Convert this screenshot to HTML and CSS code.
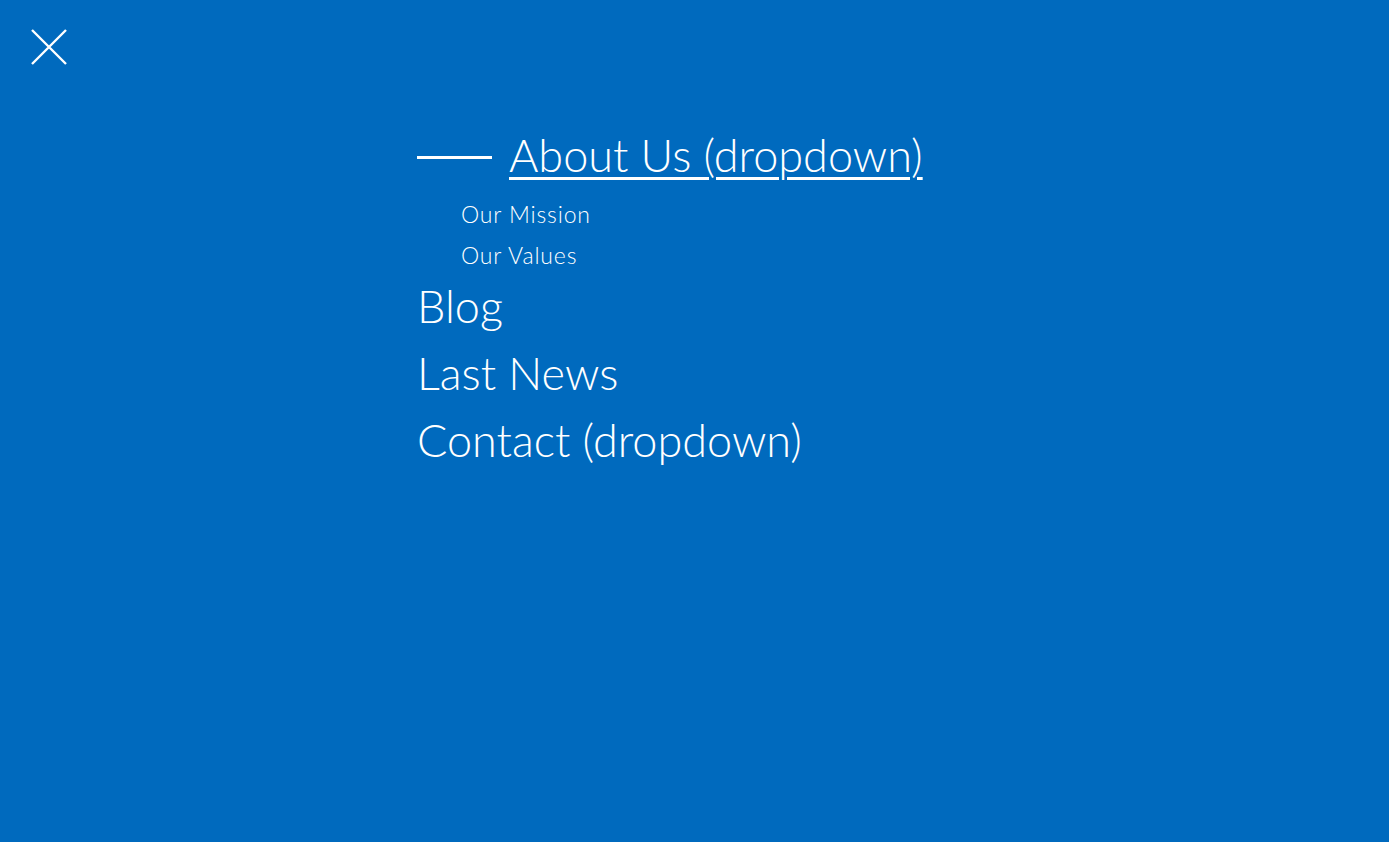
FILE: index.html
```html
<!DOCTYPE html>
<html>
<head>
<meta charset="utf-8">
<link rel="stylesheet" href="styles.css">
</head>
<body>
<div class="overlay">
  <button class="close" aria-label="Close">
    <svg width="36" height="36" viewBox="0 0 36 36"><path d="M1 1 L35 35 M35 1 L1 35" stroke="#fff" stroke-width="2.4" fill="none"/></svg>
  </button>
  <nav class="menu">
    <ul class="main">
      <li class="item active">
        <a href="#" class="link"><span class="dash"></span><span class="label">About Us (dropdown)</span></a>
        <ul class="sub">
          <li><a href="#">Our Mission</a></li>
          <li><a href="#">Our Values</a></li>
        </ul>
      </li>
      <li class="item"><a href="#" class="link">Blog</a></li>
      <li class="item"><a href="#" class="link">Last News</a></li>
      <li class="item"><a href="#" class="link">Contact (dropdown)</a></li>
    </ul>
  </nav>
</div>
</body>
</html>
```
FILE: styles.css
```css
html, body {
  margin: 0;
  padding: 0;
  height: 100%;
}
body {
  background: #006abe;
  font-family: Lato, "Open Sans", sans-serif;
  color: #fff;
}
.overlay {
  height: 100%;
  padding: 29px 0 0 31px;
  box-sizing: border-box;
}
.close {
  display: block;
  background: none;
  border: 0;
  padding: 0;
  width: 36px;
  height: 36px;
  cursor: pointer;
}
.close svg { display: block; }
.menu {
  margin: 57px 0 0 386px;
}
ul { list-style: none; margin: 0; padding: 0; }
a { color: #fff; text-decoration: none; }
.link {
  display: flex;
  align-items: center;
  font-size: 45px;
  font-weight: 300;
  line-height: 67px;
}
.dash {
  display: inline-block;
  width: 75px;
  height: 3px;
  background: #fff;
  margin-right: 17px;
  position: relative;
  top: 2px;
}
.active .label {
  text-decoration: underline;
  text-decoration-thickness: 3px;
  text-underline-offset: 5px;
}
.sub {
  padding-left: 44px;
  margin-top: 5px;
  margin-bottom: -3px;
}
.sub a {
  display: block;
  font-size: 23px;
  font-weight: 300;
  letter-spacing: 0.85px;
  line-height: 41px;
}
```
